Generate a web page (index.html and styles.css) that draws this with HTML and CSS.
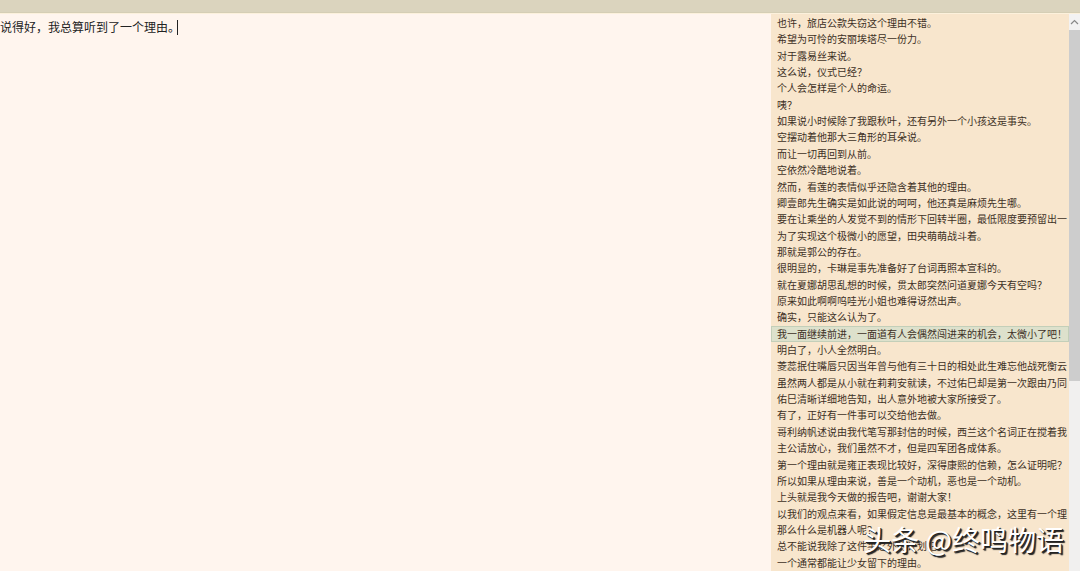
FILE: index.html
```html
<!DOCTYPE html>
<html lang="zh-CN">
<head>
<meta charset="utf-8">
<title>写作</title>
<link rel="stylesheet" href="styles.css">
</head>
<body>
<div class="app">
  <header class="titlebar"></header>
  <main class="workspace">
    <section class="editor">
      <textarea class="editor-input" aria-label="正文" spellcheck="false">说得好，我总算听到了一个理由。</textarea>
      <span class="caret"></span>
    </section>
    <aside class="panel">
      <ul class="sentences">
        <li>也许，旅店公款失窃这个理由不错。</li>
        <li>希望为可怜的安丽埃塔尽一份力。</li>
        <li>对于露易丝来说。</li>
        <li>这么说，仪式已经？</li>
        <li>个人会怎样是个人的命运。</li>
        <li>咦？</li>
        <li>如果说小时候除了我跟秋叶，还有另外一个小孩这是事实。</li>
        <li>空摆动着他那大三角形的耳朵说。</li>
        <li>而让一切再回到从前。</li>
        <li>空依然冷酷地说着。</li>
        <li>然而，看莲的表情似乎还隐含着其他的理由。</li>
        <li>卿壹郎先生确实是如此说的呵呵，他还真是麻烦先生哪。</li>
        <li>要在让乘坐的人发觉不到的情形下回转半圈，最低限度要预留出一</li>
        <li>为了实现这个极微小的愿望，田央萌萌战斗着。</li>
        <li>那就是郭公的存在。</li>
        <li>很明显的，卡琳是事先准备好了台词再照本宣科的。</li>
        <li>就在夏娜胡思乱想的时候，贯太郎突然问道夏娜今天有空吗？</li>
        <li>原来如此啊啊呜哇光小姐也难得讶然出声。</li>
        <li>确实，只能这么认为了。</li>
        <li class="selected">我一面继续前进，一面道有人会偶然闯进来的机会，太微小了吧！</li>
        <li>明白了，小人全然明白。</li>
        <li>菱蕊抿住嘴唇只因当年曾与他有三十日的相处此生难忘他战死衡云</li>
        <li>虽然两人都是从小就在莉莉安就读，不过佑巳却是第一次跟由乃同</li>
        <li>佑巳清晰详细地告知，出人意外地被大家所接受了。</li>
        <li>有了，正好有一件事可以交给他去做。</li>
        <li>哥利纳帆述说由我代笔写那封信的时候，西兰这个名词正在搅着我</li>
        <li>主公请放心，我们虽然不才，但是四军团各成体系。</li>
        <li>第一个理由就是雍正表现比较好，深得康熙的信赖，怎么证明呢？</li>
        <li>所以如果从理由来说，善是一个动机，恶也是一个动机。</li>
        <li>上头就是我今天做的报告吧，谢谢大家！</li>
        <li>以我们的观点来看，如果假定信息是最基本的概念，这里有一个理</li>
        <li>那么什么是机器人呢？</li>
        <li>总不能说我除了这件事之外的计划吧。</li>
        <li>一个通常都能让少女留下的理由。</li>
      </ul>
      <div class="scrollbar">
        <button class="scroll-up" type="button" aria-label="向上滚动">
          <svg width="9" height="6" viewBox="0 0 9 6"><path d="M1 5 4.500 1.500 8 5" fill="none" stroke="#888" stroke-width="1.200"/></svg>
        </button>
        <div class="scroll-thumb"></div>
      </div>
    </aside>
  </main>
  <div class="watermark">头条 @终鸣物语</div>
</div>
</body>
</html>
```
FILE: styles.css
```css
* {
  box-sizing: border-box;
}

body {
  margin: 0;
  font-family: "Noto Sans CJK SC", sans-serif;
}

.app {
  display: flex;
  flex-direction: column;
  height: 100vh;
  overflow: hidden;
  position: relative;
  background: #fff5ee;
}

.titlebar {
  flex: none;
  height: 13px;
  background: #dbd4be;
  border-bottom: 1px solid #d5ceb5;
}

.workspace {
  flex: 1;
  min-height: 0;
  display: grid;
  grid-template-columns: minmax(0, 1fr) 309px;
  border-top: 1px solid #fcf1dc;
}

.editor {
  position: relative;
  display: flex;
}

.editor-input {
  flex: 1;
  margin: 0;
  padding: 4px 0 0;
  border: 0;
  outline: 0;
  resize: none;
  background: #fff5ee;
  color: #222;
  font-family: inherit;
  font-size: 12px;
  line-height: 18px;
}

.caret {
  position: absolute;
  left: 177px;
  top: 6px;
  width: 1px;
  height: 15px;
  background: #222;
}

.panel {
  display: flex;
  min-height: 0;
  min-width: 0;
  background: #f8e6cd;
}

.sentences {
  flex: 1;
  min-width: 0;
  margin: 0;
  display: grid;
  grid-auto-rows: minmax(0, 1fr);
  padding: 1px 0 0;
  list-style: none;
  overflow: hidden;
  color: #3d3025;
  font-size: 10px;
  line-height: 16px;
  white-space: nowrap;
}

.sentences li {
  padding-left: 6px;
  overflow: hidden;
}

.sentences .selected {
  background: #dde1cc;
  box-shadow: inset 0 0 0 1px #c3cfb9;
}

.scrollbar {
  flex: none;
  width: 11px;
  display: flex;
  flex-direction: column;
  background: #f1f0ef;
}

.scroll-up {
  flex: none;
  height: 16px;
  padding: 0;
  border: 0;
  background: #f3f2f2;
  display: flex;
  align-items: center;
  justify-content: center;
}

.scroll-thumb {
  height: 63%;
  background: #cdcdcd;
}

.watermark {
  position: absolute;
  right: 16px;
  bottom: 12px;
  color: #fff;
  font-size: 28px;
  font-weight: 400;
  line-height: 40px;
  white-space: nowrap;
  text-shadow: 1px 1px 0 #222, 2px 2px 1px #222;
}
```
